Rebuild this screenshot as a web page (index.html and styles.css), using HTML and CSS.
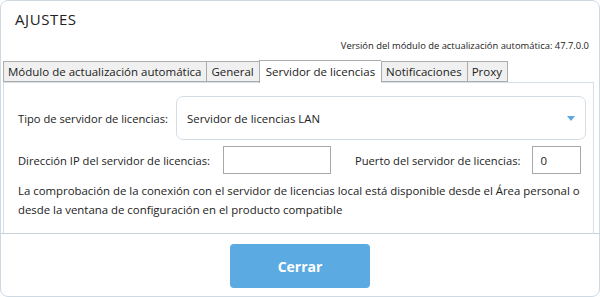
FILE: index.html
```html
<!DOCTYPE html>
<html lang="es">
<head>
  <meta charset="UTF-8" />
  <title>Ajustes</title>
  <link rel="stylesheet" href="styles.css">
</head>
<body>
  <div class="dialog">
    <div class="title">AJUSTES</div>
    <div class="version">Versión del módulo de actualización automática: 47.7.0.0</div>

    <div class="tabs">
      <div class="tab">Módulo de actualización automática</div>
      <div class="tab">General</div>
      <div class="tab active">Servidor de licencias</div>
      <div class="tab">Notificaciones</div>
      <div class="tab">Proxy</div>
    </div>

    <div class="panel">
      <div class="row">
        <label class="label">Tipo de servidor de licencias:</label>
        <div class="select">
          <span>Servidor de licencias LAN</span>
          <svg class="arrow" width="8" height="5" viewBox="0 0 8 5"><path d="M0 0 L8 0 L4 5 Z" fill="#5ba9e0"/></svg>
        </div>
      </div>

      <div class="row row-ip">
        <label class="label">Dirección IP del servidor de licencias:</label>
        <input type="text" class="input input-ip" value="" />
        <label class="label label-port">Puerto del servidor de licencias:</label>
        <input type="text" class="input input-port" value="0" />
      </div>

      <p class="note">
        La comprobación de la conexión con el servidor de licencias local está disponible desde el Área personal o
        desde la ventana de configuración en el producto compatible
      </p>
    </div>

    <div class="footer">
      <button type="button" class="btn-close">Cerrar</button>
    </div>
  </div>
</body>
</html>
```

FILE: styles.css
```css
* {
  margin: 0;
  padding: 0;
  box-sizing: border-box;
  font-family: "Open Sans", sans-serif;
}

body {
  background-color: white;
  color: #222;
}

.dialog {
  width: 600px;
  height: 297px;
  border: 1px solid #cfd9e2;
  border-radius: 8px;
  display: flex;
  flex-direction: column;
  overflow: hidden;
}

.title {
  font-size: 15px;
  letter-spacing: 0.6px;
  line-height: 20px;
  padding: 8px 0 0 14px;
  height: 38px;
}

.version {
  font-size: 9.4px;
  line-height: 14px;
  text-align: right;
  padding-right: 10px;
  height: 21px;
}

.tabs {
  display: flex;
  align-items: flex-end;
  padding-left: 2px;
  height: 23px;
  position: relative;
  z-index: 1;
}

.tab {
  font-size: 11.5px;
  line-height: 18px;
  height: 21px;
  padding: 1px 5px 0 4px;
  background-color: #f0f0f0;
  border: 1px solid #acacac;
  border-right: none;
  margin-bottom: 1px;
  white-space: nowrap;
}

.tab:nth-child(5) {
  border-right: 1px solid #acacac;
}

.tab.active {
  background-color: white;
  height: 23px;
  padding: 2px 6px 0 6px;
  margin-bottom: 0;
  border-bottom: none;
}

.tab.active + .tab {
  border-left: 1px solid #acacac;
}

.panel {
  margin: -1px 5px 0 2px;
  border: 1px solid #d5dfe7;
  border-bottom: none;
  padding: 13px 7px 0 14px;
  height: 151px;
}

.row {
  display: flex;
  align-items: center;
  gap: 8px;
  font-size: 11.2px;
}

.label {
  white-space: nowrap;
  flex-shrink: 0;
}

.select {
  flex: 1;
  height: 44px;
  border: 1px solid #d3dde6;
  border-radius: 7px;
  display: flex;
  align-items: center;
  justify-content: space-between;
  padding: 0 10px 0 10px;
  font-size: 11.4px;
}

.row-ip {
  margin-top: 6px;
  gap: 0;
}

.input {
  height: 28px;
  border: 1px solid #a9a9a9;
  font-size: 11.4px;
  padding: 0 7px;
  color: #222;
  outline: none;
  flex-shrink: 0;
}

.input-ip {
  width: 108px;
  margin-left: 13px;
}

.label-port {
  margin-left: 24px;
}

.input-port {
  width: 49px;
  margin-left: 12px;
}

.note {
  font-size: 11.4px;
  line-height: 19px;
  margin-top: 7px;
}

.footer {
  border-top: 1px solid #c9d3dc;
  display: flex;
  justify-content: center;
  padding-top: 10px;
  flex: 1;
}

.btn-close {
  width: 140px;
  height: 44px;
  background-color: #5caae2;
  color: white;
  border: none;
  border-radius: 4px;
  font-size: 14px;
  font-weight: bold;
  cursor: pointer;
}
```
